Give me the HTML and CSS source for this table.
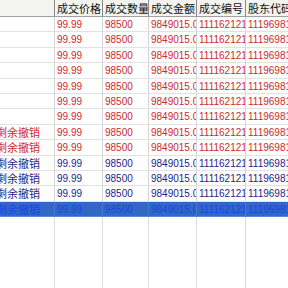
FILE: index.html
```html
<!DOCTYPE html>
<html>
<head>
<meta charset="utf-8">
<link rel="stylesheet" href="styles.css">
</head>
<body>
<div class="view">
  <div class="grid">
    <div class="row head">
      <div class="cell c0"></div>
      <div class="cell">成交价格</div>
      <div class="cell">成交数量</div>
      <div class="cell">成交金额</div>
      <div class="cell">成交编号</div>
      <div class="cell">股东代码</div>
    </div>
    <div class="row red"><div class="cell c0"></div><div class="cell">99.99</div><div class="cell">98500</div><div class="cell">9849015.0</div><div class="cell">111162121</div><div class="cell">111969812</div></div>
    <div class="row red"><div class="cell c0"></div><div class="cell">99.99</div><div class="cell">98500</div><div class="cell">9849015.0</div><div class="cell">111162121</div><div class="cell">111969812</div></div>
    <div class="row red"><div class="cell c0"></div><div class="cell">99.99</div><div class="cell">98500</div><div class="cell">9849015.0</div><div class="cell">111162121</div><div class="cell">111969812</div></div>
    <div class="row red"><div class="cell c0"></div><div class="cell">99.99</div><div class="cell">98500</div><div class="cell">9849015.0</div><div class="cell">111162121</div><div class="cell">111969812</div></div>
    <div class="row red"><div class="cell c0"></div><div class="cell">99.99</div><div class="cell">98500</div><div class="cell">9849015.0</div><div class="cell">111162121</div><div class="cell">111969812</div></div>
    <div class="row red"><div class="cell c0"></div><div class="cell">99.99</div><div class="cell">98500</div><div class="cell">9849015.0</div><div class="cell">111162121</div><div class="cell">111969812</div></div>
    <div class="row red"><div class="cell c0"></div><div class="cell">99.99</div><div class="cell">98500</div><div class="cell">9849015.0</div><div class="cell">111162121</div><div class="cell">111969812</div></div>
    <div class="row red"><div class="cell c0">剩余撤销</div><div class="cell">99.99</div><div class="cell">98500</div><div class="cell">9849015.0</div><div class="cell">111162121</div><div class="cell">111969812</div></div>
    <div class="row red"><div class="cell c0">剩余撤销</div><div class="cell">99.99</div><div class="cell">98500</div><div class="cell">9849015.0</div><div class="cell">111162121</div><div class="cell">111969812</div></div>
    <div class="row blue"><div class="cell c0">剩余撤销</div><div class="cell">99.99</div><div class="cell">98500</div><div class="cell">9849015.0</div><div class="cell">111162121</div><div class="cell">111969812</div></div>
    <div class="row blue"><div class="cell c0">剩余撤销</div><div class="cell">99.99</div><div class="cell">98500</div><div class="cell">9849015.0</div><div class="cell">111162121</div><div class="cell">111969812</div></div>
    <div class="row blue"><div class="cell c0">剩余撤销</div><div class="cell">99.99</div><div class="cell">98500</div><div class="cell">9849015.0</div><div class="cell">111162121</div><div class="cell">111969812</div></div>
    <div class="row sel"><div class="cell c0">剩余撤销</div><div class="cell">99.99</div><div class="cell">98500</div><div class="cell">9849015.0</div><div class="cell">111162121</div><div class="cell">111969812</div></div>
    <div class="row filler"><div class="cell c0"></div><div class="cell"></div><div class="cell"></div><div class="cell"></div><div class="cell"></div><div class="cell"></div></div>
  </div>
</div>
</body>
</html>
```
FILE: styles.css
```css
html, body {
  margin: 0;
  padding: 0;
  background: #ffffff;
}
.view {
  width: 288px;
  height: 288px;
  overflow: hidden;
  background: #ffffff;
}
.grid {
  margin-left: -6px;
  display: flex;
  flex-direction: column;
  height: 288px;
}
.row {
  display: grid;
  grid-template-columns: 61px 48px 46px 48px 49px 60px;
  height: 15.4px;
  flex: none;
  font-family: "Liberation Sans", Arial, "Noto Sans CJK SC", sans-serif;
  font-size: 10px;
}
.cell {
  box-sizing: border-box;
  border-right: 1px solid #d4d4d4;
  border-bottom: 1px solid #e2e2e2;
  padding-left: 2px;
  white-space: nowrap;
  overflow: hidden;
  line-height: 15px;
}
.c0 {
  font-family: "Noto Sans CJK SC", sans-serif;
  font-size: 11px;
}
.head {
  height: 17px;
  background: #f3f3ef;
  font-family: "Noto Sans CJK SC", sans-serif;
  font-size: 11px;
  color: #111111;
}
.head .cell {
  border-right: 1px solid #8a8a8a;
  border-bottom: 1px solid #a0a0a0;
  line-height: 16px;
}
.red { color: #cc2a2a; }
.blue { color: #1e1e86; }
.sel {
  background: #3267c6;
  color: #1d46e0;
}
.sel .cell {
  border-bottom: 1px solid #5a86d8;
  border-right: 1px solid #4a78d0;
}
.filler {
  flex: 1;
  height: auto;
}
.filler .cell {
  border-bottom: none;
  border-right: 1px solid #dcdcdc;
}
```
